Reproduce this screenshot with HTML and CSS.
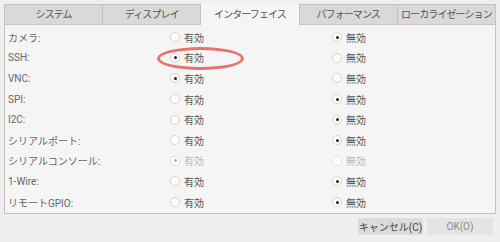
FILE: index.html
```html
<!DOCTYPE html>
<html>
<head>
<meta charset="utf-8" />
<title>Raspberry Pi の設定</title>
<link rel="stylesheet" href="styles.css">
</head>
<body>
<div class="dialog">
	<ul class="tabs">
		<li>システム</li>
		<li>ディスプレイ</li>
		<li class="active">インターフェイス</li>
		<li>パフォーマンス</li>
		<li class="last">ローカライゼーション</li>
	</ul>
	<div class="panel">
		<div class="row">
			<span class="label">カメラ:</span>
			<span class="opt"><i class="radio"></i>有効</span>
			<span class="opt"><i class="radio on"></i>無効</span>
		</div>
		<div class="row">
			<span class="label">SSH:</span>
			<span class="opt mark"><i class="radio on"></i>有効<b class="ring"></b></span>
			<span class="opt"><i class="radio"></i>無効</span>
		</div>
		<div class="row">
			<span class="label">VNC:</span>
			<span class="opt"><i class="radio on"></i>有効</span>
			<span class="opt"><i class="radio"></i>無効</span>
		</div>
		<div class="row">
			<span class="label">SPI:</span>
			<span class="opt"><i class="radio"></i>有効</span>
			<span class="opt"><i class="radio on"></i>無効</span>
		</div>
		<div class="row">
			<span class="label">I2C:</span>
			<span class="opt"><i class="radio"></i>有効</span>
			<span class="opt"><i class="radio on"></i>無効</span>
		</div>
		<div class="row">
			<span class="label">シリアルポート:</span>
			<span class="opt"><i class="radio"></i>有効</span>
			<span class="opt"><i class="radio on"></i>無効</span>
		</div>
		<div class="row">
			<span class="label">シリアルコンソール:</span>
			<span class="opt off"><i class="radio on"></i>有効</span>
			<span class="opt off"><i class="radio"></i>無効</span>
		</div>
		<div class="row">
			<span class="label">1-Wire:</span>
			<span class="opt"><i class="radio"></i>有効</span>
			<span class="opt"><i class="radio on"></i>無効</span>
		</div>
		<div class="row">
			<span class="label">リモートGPIO:</span>
			<span class="opt"><i class="radio"></i>有効</span>
			<span class="opt"><i class="radio on"></i>無効</span>
		</div>
	</div>
	<div class="buttons">
		<button class="btn">キャンセル(C)</button>
		<button class="btn ok">OK(O)</button>
	</div>
</div>
</body>
</html>
```

FILE: styles.css
```css
* {
	padding:0;
	margin:0;
	box-sizing:border-box;
}
html, body {
	background:#efefef;
	width:500px;
	height:242px;
	overflow:hidden;
}
body {
	font-family:Roboto, "Noto Sans CJK JP", sans-serif;
	font-size:10px;
	color:#555;
}
ul {
	list-style-type:none;
}
.dialog {
	padding:4px 4px 0 4px;
}
.tabs {
	display:flex;
	height:21px;
	border:1px solid #c4c4c4;
	border-bottom:none;
}
.tabs li {
	flex:1;
	text-align:center;
	line-height:20px;
	white-space:nowrap;
	letter-spacing:-0.9px;
	background:#d9d9d9;
	border-right:1px solid #c4c4c4;
	border-bottom:1px solid #c4c4c4;
	color:#555;
}
.tabs li.last {
	border-right:none;
}
.tabs li.active {
	background:#f5f5f5;
	border-bottom:none;
	margin-top:-2px;
	line-height:24px;
	height:22px;
}
.panel {
	background:#f5f5f5;
	border:1px solid #c4c4c4;
	border-top:none;
	padding:2px 3px 1px 3px;
}
.row {
	display:grid;
	grid-template-columns:162px 162px 1fr;
	height:20.6px;
	align-items:center;
}
.label {
	color:#666;
}
.opt {
	display:flex;
	align-items:center;
	color:#555;
}
.opt.off {
	color:#bbb;
}
.radio {
	width:10px;
	height:10px;
	border-radius:50%;
	border:1px solid #d4d4d4;
	background:#fff;
	margin-right:4px;
	position:relative;
}
.radio.on::after {
	content:"";
	position:absolute;
	left:2.5px;
	top:2.5px;
	width:3px;
	height:3px;
	border-radius:50%;
	background:#222;
}
.opt.off .radio {
	border-color:#e2e2e2;
}
.opt.off .radio.on::after {
	background:#aaa;
}
.mark {
	position:relative;
}
.ring {
	position:absolute;
	left:-13px;
	top:50%;
	margin-top:-11px;
	width:87px;
	height:23px;
	border:3px solid #e9716c;
	border-radius:50%;
}
.buttons {
	display:flex;
	justify-content:flex-end;
	gap:4px;
	padding:4px 3px 0 0;
}
.btn {
	width:65px;
	height:17px;
	border:none;
	background:#dcdcdc;
	font-family:Roboto, "Noto Sans CJK JP", sans-serif;
	font-size:10px;
	color:#444;
}
.btn.ok {
	width:66px;
	background:#e4e4e4;
	color:#8a8a8a;
}
```
